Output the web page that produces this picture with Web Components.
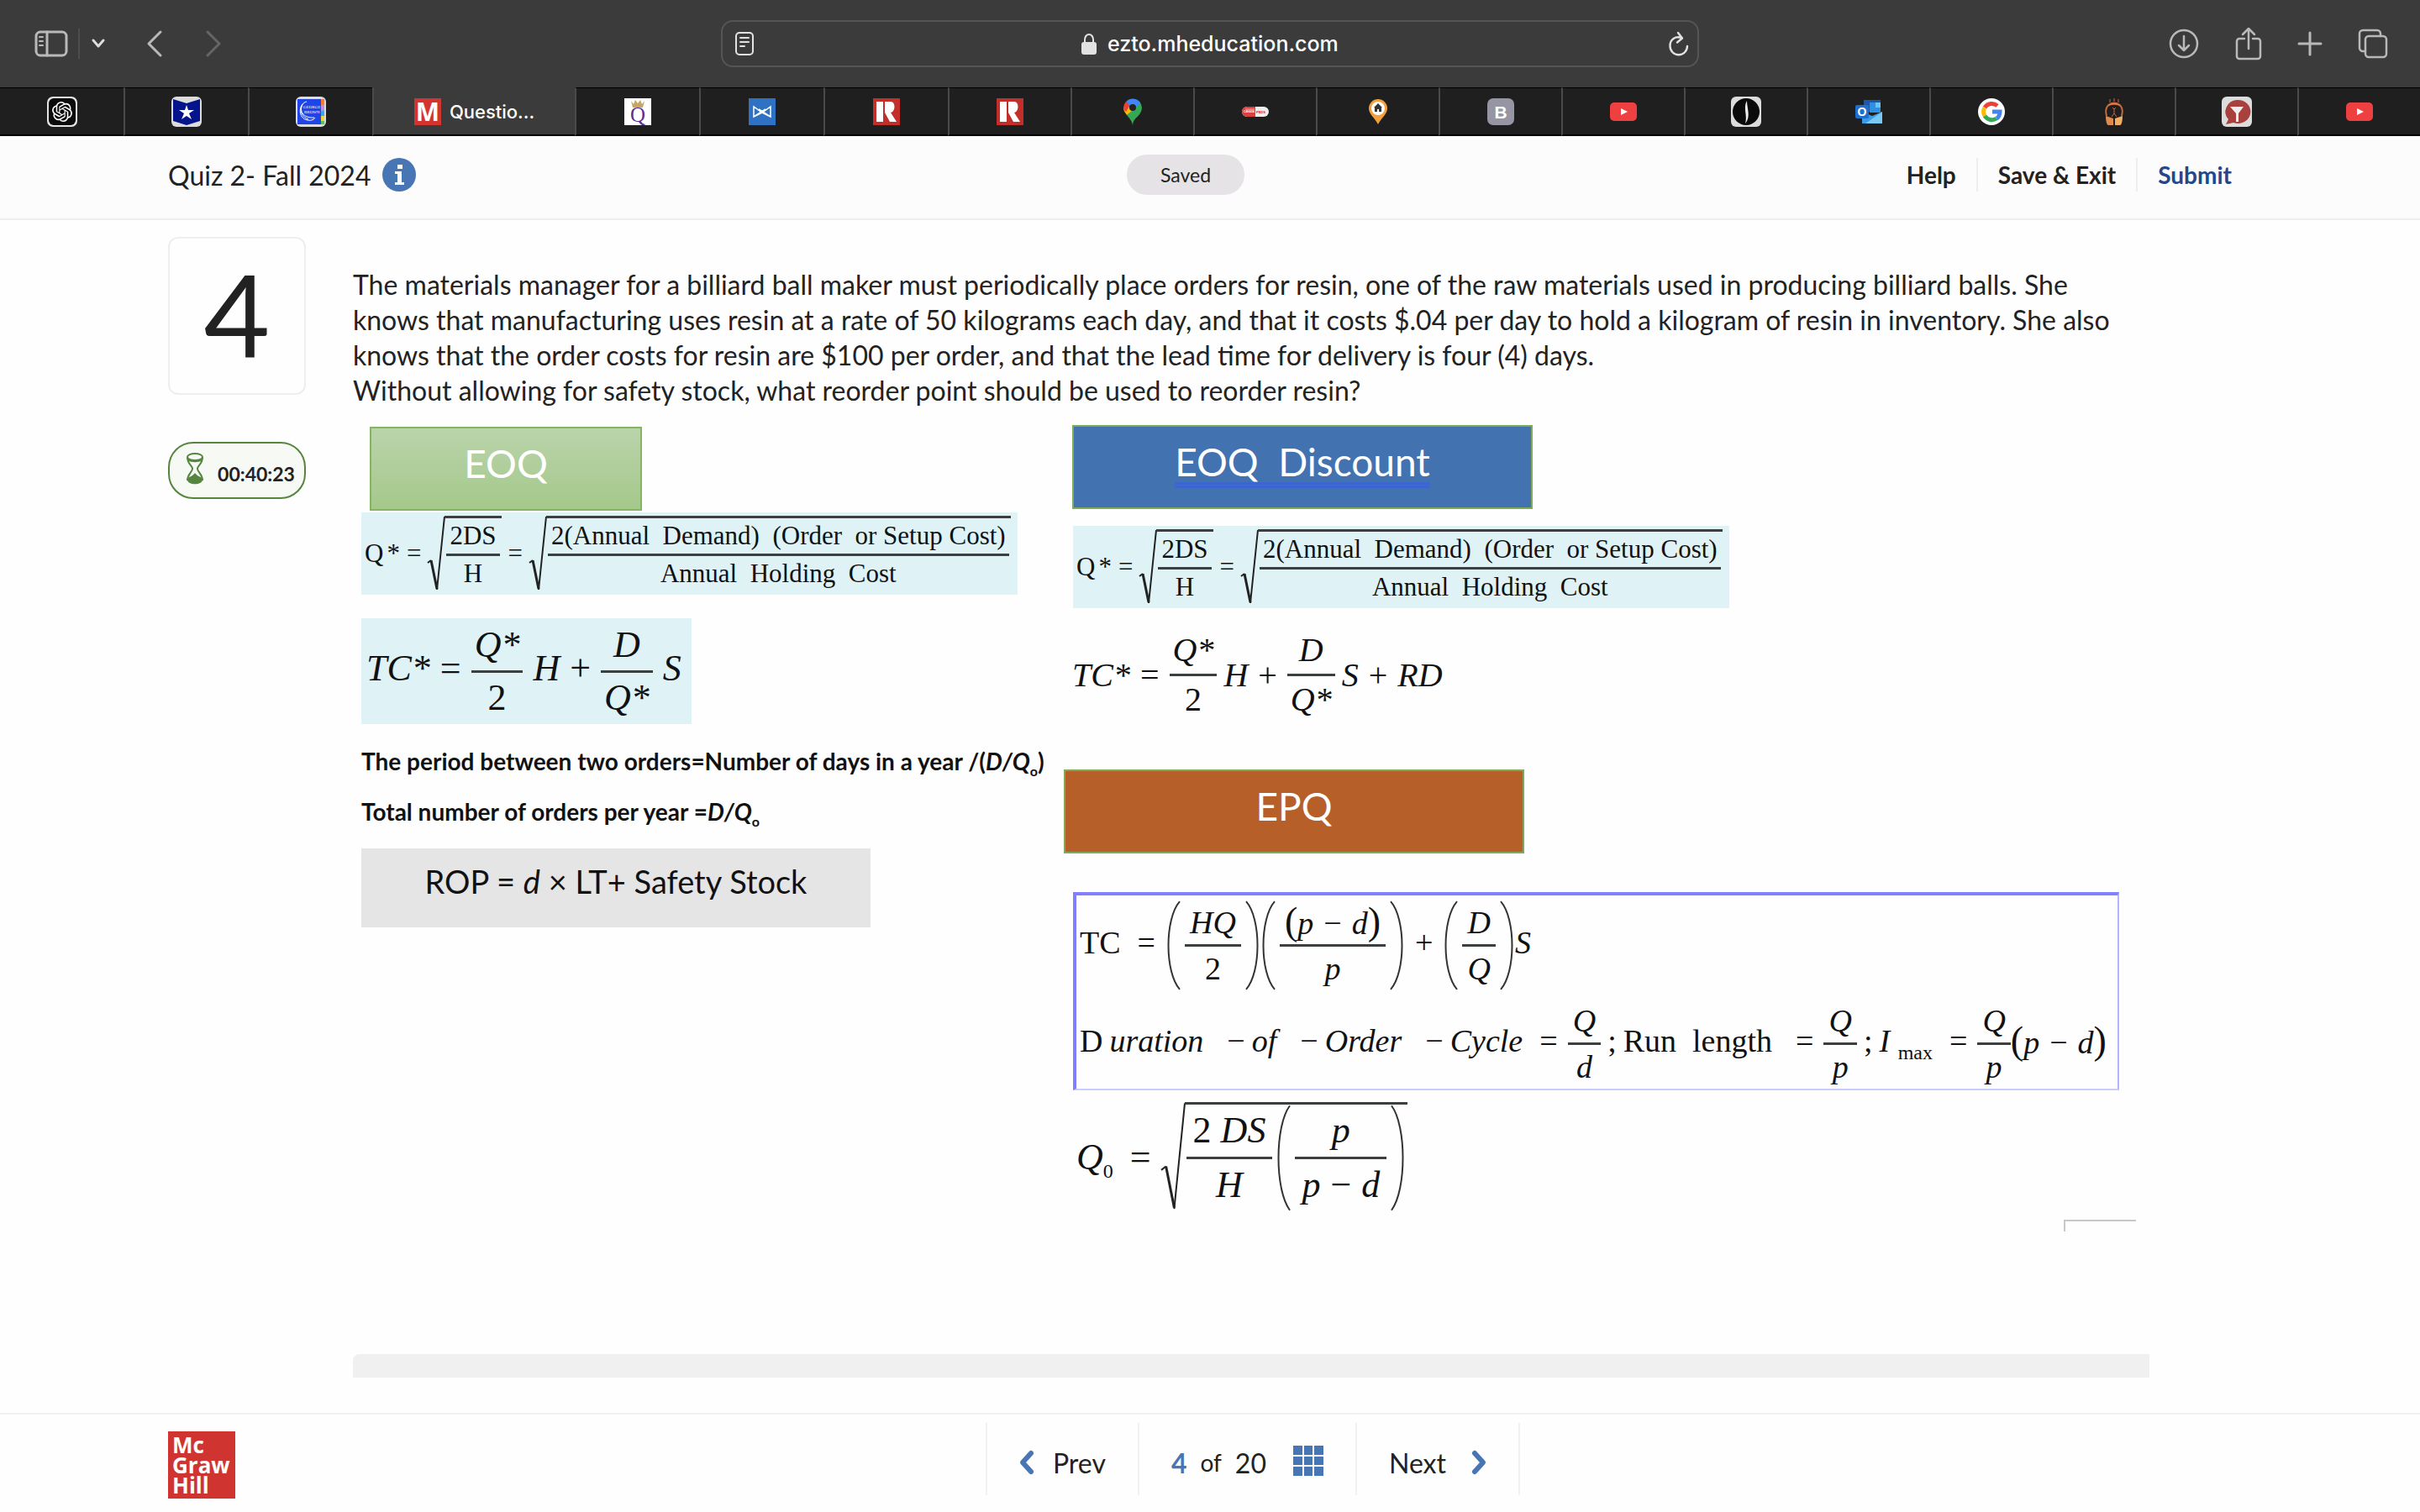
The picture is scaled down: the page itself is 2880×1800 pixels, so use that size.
<!DOCTYPE html>
<html lang="en">
<head>
<meta charset="utf-8">
<title>Quiz 2- Fall 2024</title>
<style>
  html{background:#fefefe}
  body{margin:0;min-height:100vh;display:flex;flex-direction:column;font-family:Lato,"Open Sans",sans-serif;color:#222}
  quiz-main{flex:1}
</style>
</head>
<body>
<browser-toolbar></browser-toolbar>
<browser-tabs></browser-tabs>
<quiz-header>Quiz 2- Fall 2024</quiz-header>

<quiz-main number="4" time="00:40:23">
  <question-text>
    The materials manager for a billiard ball maker must periodically place orders for resin, one of the raw materials used in producing billiard balls. She knows that manufacturing uses resin at a rate of 50 kilograms each day, and that it costs $.04 per day to hold a kilogram of resin in inventory. She also knows that the order costs for resin are $100 per order, and that the lead time for delivery is four (4) days.<br>
    Without allowing for safety stock, what reorder point should be used to reorder resin?
  </question-text>
  <formula-sheet></formula-sheet>
</quiz-main>

<quiz-footer current="4" total="20"></quiz-footer>

<script>
const define = (name, html) => customElements.define(name, class extends HTMLElement {
  constructor(){ super(); this.attachShadow({mode:'open'}); }
  connectedCallback(){
    this.shadowRoot.innerHTML = typeof html === 'function' ? html(this) : html;
  }
});

/* ---------- icons: [width, height, markup] ---------- */
const line = 'fill="none" stroke="currentColor" stroke-linecap="round" stroke-linejoin="round"';
const icons = {
  sidebar: [40,32,`<g ${line} stroke-width="3"><rect x="2" y="2" width="36" height="28" rx="5"/><path d="M15 2v28"/><path d="M6 8h4M6 13h4M6 18h4" stroke-width="2"/></g>`],
  down: [16,12,`<path ${line} stroke-width="3" d="M2 2l6 7 6-7"/>`],
  back: [18,32,`<path ${line} stroke-width="3" d="M16 2L2 16l14 14"/>`],
  forward: [18,32,`<path ${line} stroke-width="3" d="M2 2l14 14L2 30"/>`],
  reader: [24,30,`<g ${line} stroke-width="2"><rect x="2" y="2" width="20" height="26" rx="4"/><path d="M7 8h10M7 13h10M7 18h5"/></g>`],
  lock: [20,26,`<path d="M5 12V8a5 6 0 0 1 10 0v4" fill="none" stroke="currentColor" stroke-width="2"/><rect x="1" y="11" width="18" height="15" rx="3" fill="currentColor"/>`],
  reload: [24,30,`<path ${line} stroke-width="2.4" d="M16 8.500C8 5 1 10 1.500 18a10.200 10.200 0 0 0 20.500 0M11 2l5 6.500-6 5"/>`],
  download: [36,36,`<g ${line} stroke-width="2.500"><circle cx="18" cy="18" r="16"/><path d="M18 9v17M12 20l6 6 6-6"/></g>`],
  share: [32,40,`<g ${line} stroke-width="2.500"><path d="M11 14H5a3 3 0 0 0-3 3v18a3 3 0 0 0 3 3h22a3 3 0 0 0 3-3V17a3 3 0 0 0-3-3h-6"/><path d="M16 26V3M9 9l7-7 7 7"/></g>`],
  plus: [28,28,`<path ${line} stroke-width="3" d="M14 1v26M1 14h26"/>`],
  windows: [36,36,`<g ${line} stroke-width="2.500"><rect x="9" y="9" width="25" height="25" rx="4"/><path d="M9 27H6a4 4 0 0 1-4-4V6a4 4 0 0 1 4-4h17a4 4 0 0 1 4 4v3"/></g>`],
  info: [40,40,`<circle cx="20" cy="20" r="20" fill="#4875b4"/><path d="M18 8h6v5h-6zM15 16h8v13h3v3H15v-3h3v-10h-3z" fill="#fff"/>`],
  hourglass: [22,38,`<g fill="none" stroke="#55853f" stroke-width="2"><ellipse cx="11" cy="5" rx="9" ry="4"/><path d="M2 5c0 9 6 10 6 14S2 25 2 33M20 5c0 9-6 10-6 14s6 6 6 14M2 8c4 3 14 3 18 0"/></g><path d="M2 32c0-4 6-3 9-8 3 5 9 4 9 8 0 7-18 7-18 0z" fill="#55853f"/>`],
  prev: [18,30,`<path fill="none" stroke="#4875b4" stroke-width="6" stroke-linecap="round" stroke-linejoin="round" d="M14 4L4 15l10 11"/>`],
  next: [18,30,`<path fill="none" stroke="#4875b4" stroke-width="6" stroke-linecap="round" stroke-linejoin="round" d="M4 4l10 11L4 26"/>`],
  grid: [36,36,`<path fill="#4875b4" d="M0 0h11v11H0zM13 0h10v11H13zM25 0h11v11H25zM0 13h11v10H0zM13 13h10v10H13zM25 13h11v10H25zM0 25h11v11H0zM13 25h10v11H13zM25 25h11v11H25z"/>`],

  /* favicons */
  openai: [36,36,`<rect width="36" height="36" rx="7" fill="#e4e4e4"/><rect x="2" y="2" width="32" height="32" rx="6" fill="#0b0b0b"/><path transform="translate(6 6)" fill="#fff" d="M22.2819 9.8211a5.9847 5.9847 0 0 0-.5157-4.9108 6.0462 6.0462 0 0 0-6.5098-2.9A6.0651 6.0651 0 0 0 4.9807 4.1818a5.9847 5.9847 0 0 0-3.9977 2.9 6.0462 6.0462 0 0 0 .7427 7.0966 5.98 5.98 0 0 0 .511 4.9107 6.051 6.051 0 0 0 6.5146 2.9001A5.9847 5.9847 0 0 0 13.2599 24a6.0557 6.0557 0 0 0 5.7718-4.2058 5.9894 5.9894 0 0 0 3.9977-2.9001 6.0557 6.0557 0 0 0-.7475-7.0729zm-9.022 12.6081a4.4755 4.4755 0 0 1-2.8764-1.0408l.1419-.0804 4.7783-2.7582a.7948.7948 0 0 0 .3927-.6813v-6.7369l2.02 1.1686a.071.071 0 0 1 .038.052v5.5826a4.504 4.504 0 0 1-4.4945 4.4944zm-9.6607-4.1254a4.4708 4.4708 0 0 1-.5346-3.0137l.142.0852 4.783 2.7582a.7712.7712 0 0 0 .7806 0l5.8428-3.3685v2.3324a.0804.0804 0 0 1-.0332.0615L9.74 19.9502a4.4992 4.4992 0 0 1-6.1408-1.6464zM2.3408 7.8956a4.485 4.485 0 0 1 2.3655-1.9728V11.6a.7664.7664 0 0 0 .3879.6765l5.8144 3.3543-2.0201 1.1685a.0757.0757 0 0 1-.071 0l-4.8303-2.7865A4.504 4.504 0 0 1 2.3408 7.872zm16.5963 3.8558L13.1038 8.364 15.1192 7.2a.0757.0757 0 0 1 .071 0l4.8303 2.7913a4.4944 4.4944 0 0 1-.6765 8.1042v-5.6772a.79.79 0 0 0-.407-.667zm2.0107-3.0231l-.142-.0852-4.7735-2.7818a.7759.7759 0 0 0-.7854 0L9.409 9.2297V6.8974a.0662.0662 0 0 1 .0284-.0615l4.8303-2.7866a4.4992 4.4992 0 0 1 6.6802 4.66zM8.3065 12.863l-2.02-1.1638a.0804.0804 0 0 1-.038-.0567V6.0742a4.4992 4.4992 0 0 1 7.3757-3.4537l-.142.0805L8.704 5.459a.7948.7948 0 0 0-.3927.6813zm1.0976-2.3654l2.602-1.4998 2.6069 1.4998v2.9994l-2.5974 1.4997-2.6067-1.4997Z"/>`],
  star: [36,36,`<rect width="36" height="36" rx="6" fill="#dcdcdc"/><path fill="#06148c" d="M2 3l16 5 16-5v26l-16 5-16-5z"/><path fill="#fff" d="M18 10l2 6h7l-6 4 3 7-6-4-6 4 3-7-6-4h7z"/>`],
  gbc: [36,36,`<rect width="36" height="36" rx="6" fill="#dcdcdc"/><rect x="2" y="3" width="28" height="30" fill="#1f45e6"/><path fill="#f47b3b" d="M30 3h4v7h-4z"/><path fill="#b98cf0" d="M30 10h4v7h-4z"/><path fill="#3ba5f4" d="M30 17h4v6h-4z"/><path fill="#f3d43b" d="M30 23h4v6h-4z"/><path fill="#4cc95a" d="M30 29h4v4h-4z"/><path fill="none" stroke="#fff" d="M13 6C3 8 2 26 14 28c5 1 8-1 9-3M9 8c-6 8-1 18 13 17M7 11c-3 8 2 14 8 16"/><g fill="#fff" font-family="Liberation Serif" font-size="5"><text x="9" y="14">GEORGE</text><text x="10" y="20">BROWN</text></g>`],
  mgh: [32,32,`<rect width="32" height="32" fill="#d2352f"/><text x="16" y="27" text-anchor="middle" font-family="Open Sans" font-weight="700" font-size="30" fill="#fff">M</text>`],
  queens: [32,32,`<rect width="32" height="32" fill="#fff"/><path fill="#c5a663" d="M8 3l3 4 2-5 3 4 3-4 2 5 3-4-2 8H10z"/><text x="16" y="28" text-anchor="middle" font-family="Liberation Serif" font-size="25" fill="#5c2f91">Q</text>`],
  mesh: [32,32,`<rect width="32" height="32" fill="#2f72c4"/><path fill="none" stroke="#fff" stroke-width="1.500" d="M6 10v12l10-5 10 5V10l-10 7zM6 22l14-9M26 22l-14-9"/>`],
  realtor: [32,32,`<rect width="32" height="32" fill="#c22f2a"/><path fill="#fff" d="M4 4h8v24H4z"/><path fill="#fff" d="M14 4h7c6 0 6 12 0 13l7 11h-8l-6-11z"/>`],
  maps: [24,32,`<path fill="#34a853" d="M12 32c0-9 11-11 11-21a11 11 0 0 0-3-7L5 20c4 5 6 7 7 12z"/><path fill="#fbbc04" d="M5 20C2 16 1 14 1 11l5-4 5 8z"/><path fill="#ea4335" d="M1 11a11 11 0 0 1 3-7l5 4-5 8c-2-2-3-3-3-5z"/><path fill="#4285f4" d="M4 4a11 11 0 0 1 17 1l-9 11-4-8z"/><circle cx="12" cy="11" r="4" fill="#222"/>`],
  pill: [32,14,`<rect width="32" height="12" y="1" rx="6" fill="#eee"/><path fill="#d8413d" d="M6 1h10v12H6A6 6 0 0 1 6 1z"/><path d="M4 4h11" stroke="#f2b5b3"/><g font-family="Liberation Sans" font-weight="700"><text x="2" y="8" font-size="3" fill="#fff">CANADA</text><text x="17" y="9" font-size="4" fill="#c22">PEDS</text></g>`],
  house: [24,32,`<path fill="#f2a03d" d="M12 1a11 11 0 0 1 11 11c0 7-7 11-11 19C8 23 1 19 1 12A11 11 0 0 1 12 1z"/><circle cx="12" cy="12" r="8" fill="#fff"/><path fill="#333" d="M12 6l5 5h-1v5h-3v-3h-2v3H8v-5H7z"/>`],
  blog: [32,32,`<rect width="32" height="32" rx="7" fill="#9595a3"/><text x="16" y="24" text-anchor="middle" font-family="Liberation Sans" font-weight="700" font-size="21" fill="#fff">B</text>`],
  youtube: [32,22,`<rect width="32" height="22" rx="5" fill="#ee4040"/><path fill="#fff" d="M13 7l8 4-8 4z"/>`],
  leaf: [36,36,`<rect width="36" height="36" rx="6" fill="#dcdcdc"/><circle cx="18" cy="18" r="16" fill="#0a0a0a"/><path fill="#eee" d="M19 5c-5 8 1 18-2 27 7-8 2-18 2-27z"/>`],
  outlook: [32,28,`<path fill="#1d57a8" d="M10 0h20v14H10z"/><path fill="#2f8fe0" d="M17 3h13v12H17z"/><path fill="#6cc6f5" d="M24 3h6v6h-6z"/><path fill="#3b9be8" d="M8 14l12 5 12-5v14H8z"/><path fill="#79c8f5" d="M32 14v14L12 28z"/><rect y="6" width="16" height="16" rx="2" fill="#1f6fcf"/><text x="8" y="19" text-anchor="middle" font-family="Liberation Sans" font-weight="700" font-size="14" fill="#fff">O</text>`],
  google: [32,32,`<circle cx="16" cy="16" r="16" fill="#fff"/><g fill="none" stroke-width="5"><path stroke="#ea4335" d="M8 11a10 10 0 0 1 15-2"/><path stroke="#fbbc05" d="M8 21a10 10 0 0 1 0-10"/><path stroke="#34a853" d="M22 24a10 10 0 0 1-14-3"/><path stroke="#4285f4" d="M17 16h9c0 4-2 7-4 8"/></g>`],
  beetle: [24,32,`<g fill="none" stroke="#c96a3d"><path d="M7 1v4M12 0v4M17 1v4"/><path stroke-width="2" d="M3 21C0 10 6 6 12 6s12 4 9 15"/><path d="M12 13v5l-3 4M12 18l3 4M10 11l2 2 2-2"/></g><path fill="#d97445" d="M4 10c3-7 13-7 16 0-4-3-12-3-16 0z"/><path fill="#e08a4e" d="M2 21l9 3v8H5c-2 0-3-6-3-11z"/><path fill="#efb064" d="M22 21l-9 3v8h6c2 0 3-6 3-11z"/>`],
  funnel: [36,36,`<rect width="36" height="36" rx="6" fill="#dcdcdc"/><path fill="#a8403d" d="M18 4a15 14 0 1 1-4 27l-9 2 3-6A15 14 0 0 1 18 4z"/><path fill="#eee" d="M10 12h16l-6 8v10h-3V20z"/>`]
};

define('ui-icon', el => {
  const [w, h, body] = icons[el.getAttribute('name')];
  return `<style>:host{display:inline-flex;flex:none}svg{display:block;overflow:visible}</style>
    <svg width="${w}" height="${h}" viewBox="0 0 ${w} ${h}" aria-hidden="true">${body}</svg>`;
});

/* ---------- browser chrome ---------- */
define('browser-toolbar', `
  <style>
    :host{display:grid;grid-template-columns:1fr minmax(0,1164px) 1fr;align-items:center;height:104px;background:#3b3b3b;color:#b9b9b9;font-family:Inter,sans-serif}
    button{border:0;padding:0;background:none;color:inherit;display:flex}
    .left{display:flex;align-items:center;padding-left:41px}
    .sep{width:2px;height:36px;background:#4d4d4d;margin:0 14px 0 12px}
    .left .back{margin:0 52px 0 50px}
    .off{color:#666}
    .menu{color:#ddd}
    .url{display:flex;align-items:center;justify-content:space-between;box-sizing:border-box;height:56px;border:2px solid #555;border-radius:14px;padding:0 10px 0 14px;color:#e2e2e2}
    label{display:flex;align-items:center;gap:12px}
    input{border:0;padding:0;background:none;color:#fff;font:500 25px Inter,sans-serif;width:280px}
    .right{display:flex;align-items:center;justify-content:flex-end;gap:43px;padding-right:38px}
  </style>
  <div class="left">
    <button aria-label="Sidebar"><ui-icon name="sidebar"></ui-icon></button>
    <span class="sep"></span>
    <button class="menu" aria-label="Tab groups"><ui-icon name="down"></ui-icon></button>
    <button class="back" aria-label="Back"><ui-icon name="back"></ui-icon></button>
    <button class="off" aria-label="Forward"><ui-icon name="forward"></ui-icon></button>
  </div>
  <div class="url">
    <button aria-label="Reader"><ui-icon name="reader"></ui-icon></button>
    <label><ui-icon name="lock"></ui-icon><input aria-label="Address" value="ezto.mheducation.com"></label>
    <button aria-label="Reload"><ui-icon name="reload"></ui-icon></button>
  </div>
  <div class="right">
    <button aria-label="Downloads"><ui-icon name="download"></ui-icon></button>
    <button aria-label="Share"><ui-icon name="share"></ui-icon></button>
    <button aria-label="New tab"><ui-icon name="plus"></ui-icon></button>
    <button aria-label="All tabs"><ui-icon name="windows"></ui-icon></button>
  </div>
`);

const tabs = ['openai','star','gbc','mgh','queens','mesh','realtor','realtor','maps','pill','house','blog','youtube','leaf','outlook','google','beetle','funnel','youtube'];
define('browser-tabs', () => `
  <style>
    :host{display:grid;grid-template-columns:147fr 148fr 148fr 241fr repeat(3,148fr) repeat(12,146fr);height:58px;background:#1f1f1f;font-family:Inter,sans-serif}
    button{display:flex;align-items:center;justify-content:center;gap:10px;min-width:0;border:0;border-top:1px solid #000;border-bottom:2px solid #000;padding:0;background:none;color:#fff;font:500 22px Inter,sans-serif}
    button + button{border-left:2px solid #4a4a4a}
    .on{background:#3b3b3b;border-top-color:#3b3b3b}
  </style>
  ${tabs.map(t => t === 'mgh'
    ? `<button class="on"><ui-icon name="mgh"></ui-icon>Questio...</button>`
    : `<button aria-label="${t}"><ui-icon name="${t}"></ui-icon></button>`).join('')}
`);

/* ---------- quiz header ---------- */
define('quiz-header', `
  <style>
    :host{display:grid;grid-template-columns:1141fr auto 1175fr;align-items:center;height:92px;padding:0 224px 6px 200px;background:#fcfcfc;border-bottom:2px solid #eee}
    .title{display:flex;align-items:center;gap:14px;font-size:32px}
    .saved{display:flex;align-items:center;justify-content:center;width:140px;height:48px;border-radius:24px;background:#e6e3e6;font-size:23px}
    nav{display:flex;align-items:center;justify-content:flex-end}
    a{color:#222;text-decoration:none;font-size:28px;font-weight:700;line-height:40px;padding:0 24px}
    a + a{border-left:2px solid #eee}
    a:last-child{color:#23478a;padding-right:0}
    button{border:0;padding:0;background:none;display:flex}
  </style>
  <div class="title"><slot></slot><button aria-label="Info"><ui-icon name="info"></ui-icon></button></div>
  <span class="saved">Saved</span>
  <nav><a href="#help">Help</a><a href="#exit">Save &amp; Exit</a><a href="#submit">Submit</a></nav>
`);

/* ---------- question ---------- */
define('quiz-main', el => `
  <style>
    :host{display:grid;grid-template-columns:164px minmax(0,1fr);gap:56px;align-items:start;padding:20px 322px 40px 200px}
    aside{display:flex;flex-direction:column;gap:56px}
    .num{display:flex;align-items:center;justify-content:center;height:178px;padding-bottom:6px;border:2px solid #eee;border-radius:12px;font-size:136px}
    .time{display:flex;align-items:center;justify-content:center;gap:16px;height:64px;padding-left:8px;border:2px solid #55853f;border-radius:30px;background:#f7f9f5;font-size:23px;font-weight:700}
    .time ui-icon{padding-bottom:4px}
    .time span{padding-top:8px}
    .end{height:28px;background:#f0f0f0;border-top-left-radius:8px}
  </style>
  <aside>
    <div class="num">${el.getAttribute('number')}</div>
    <div class="time"><ui-icon name="hourglass"></ui-icon><span>${el.getAttribute('time')}</span></div>
  </aside>
  <section><slot></slot><div class="end"></div></section>
`);

define('question-text', `
  <style>:host{display:block;padding-top:36px;font-size:32px;line-height:42px}</style>
  <slot></slot>
`);

/* ---------- math parts ---------- */
// a row of terms, centred on the fraction bar
define('m-row', `
  <style>
    :host{display:flex;align-items:center;white-space:nowrap;font-family:"Liberation Serif",serif;color:#111}
    ::slotted(:not(m-frac,m-root,m-paren)){padding-bottom:var(--lift,0)}
  </style>
  <slot></slot>
`);

define('m-frac', `
  <style>
    :host{display:inline-flex;flex-direction:column;align-items:stretch;text-align:center}
    div{display:flex;align-items:center;justify-content:center;height:var(--line,42px);line-height:var(--line,42px);padding:0 var(--pad,4px)}
    hr{width:100%;height:3px;margin:0;border:0;background:#3c3f40}
  </style>
  <div><slot name="n"></slot></div><hr><div><slot name="d"></slot></div>
`);

define('m-root', `
  <style>
    :host{display:inline-flex;align-items:stretch}
    svg{display:block;width:var(--tick,20px);height:auto;overflow:visible}
    div{display:flex;align-items:center;border-top:3px solid #3c3f40;padding:0 2px}
  </style>
  <svg viewBox="0 0 20 90" preserveAspectRatio="none" fill="none" stroke="#222">
    <path d="M0 56l4-3" stroke-width="2" vector-effect="non-scaling-stroke"/>
    <path d="M4 53l7 34" stroke-width="3" vector-effect="non-scaling-stroke"/>
    <path d="M11 88L20 1" stroke-width="2" vector-effect="non-scaling-stroke"/>
  </svg>
  <div><slot></slot></div>
`);

const paren = d => `<svg viewBox="0 0 16 100" preserveAspectRatio="none"><path d="${d}" fill="none" stroke="#333" stroke-width="2" vector-effect="non-scaling-stroke"/></svg>`;
define('m-paren', `
  <style>
    :host{display:inline-flex;align-items:stretch}
    svg{display:block;width:16px;height:auto;margin:0 2px}
    div{display:flex;align-items:center;padding:0 3px}
  </style>
  ${paren('M15 1C-3 20-3 80 15 99')}<div><slot></slot></div>${paren('M1 1c18 19 18 79 0 98')}
`);

define('m-op', `
  <style>
    :host{display:inline-block;margin:0 12px;font-style:normal}
    :host([tight]){margin:0 8px}
    :host([wide]){margin:0 12px 0 20px}
    :host([far]){margin:0 12px 0 28px}
    :host([minus]){margin:0 8px 0 28px}
  </style>
  <slot></slot>
`);

/* ---------- formula sheet ---------- */
const eoq = `
  <m-row class="eq">
    <span>Q</span><span class="star">*</span><m-op tight>=</m-op>
    <m-root><m-frac><span slot="n">2DS</span><span slot="d">H</span></m-frac></m-root>
    <m-op tight>=</m-op>
    <m-root><m-frac><span slot="n">2(Annual&nbsp; Demand)&nbsp; (Order&nbsp; or Setup Cost)</span><span slot="d">Annual&nbsp; Holding&nbsp; Cost</span></m-frac></m-root>
  </m-row>`;
const pd = `<span class="big">(</span><i>p</i><m-op>−</m-op><i>d</i><span class="big">)</span>`;

define('formula-sheet', `
  <style>
    :host{display:grid;grid-template-columns:836fr 1292fr;align-items:start;padding:20px 0 146px 10px;color:#111}
    .col{display:flex;flex-direction:column;align-items:flex-start}
    h2{box-sizing:border-box;height:100px;margin:0;text-align:center;font-size:46px;font-weight:400;line-height:84px;color:#fff;border:2px solid #7dab59}
    .green{width:324px;margin:2px 0 2px 10px;background:linear-gradient(#bad4ab,#a5c88b);border-color:#86b562}
    .blue{width:548px;margin:0 0 20px 10px;background:#4272b0}
    .blue span{white-space:pre;text-decoration:underline double #3b66d0 3px;text-underline-offset:7px}
    .brown{width:548px;margin:0 0 46px;background:#b65f29}
    .eq{box-sizing:border-box;height:98px;padding:0 8px 0 4px;background:#dff3f7;font-size:31px}
    .star{margin-left:4px}
    .tc{box-sizing:border-box;height:126px;margin:28px 0 14px;padding:0 12px 0 6px;background:#dff3f7;font-size:44px;--line:60px;--lift:8px}
    p{margin:0;font-size:28px;font-weight:700;line-height:60px;white-space:nowrap}
    sub{font-size:16px;line-height:0}
    .rop{box-sizing:border-box;width:606px;height:94px;margin-top:14px;text-align:center;background:#e5e5e5;font-size:38px;font-weight:400;line-height:78px}
    .right > m-row,.box{margin-left:11px}
    .right > .tcd{margin:22px 0 55px 10px;font-size:40px;--line:56px}
    .box{display:flex;flex-direction:column;gap:10px;align-self:stretch;margin-right:36px;padding:6px 0 0 4px;border:solid #8080ff;border-width:4px 2px 2px 4px;border-right-color:#b3b3ff;border-bottom-color:#ccccff;font-size:38px;--line:52px;--pad:6px;--lift:8px}
    .big{font-size:46px}
    .right > .q0{margin:14px 0 0 15px;font-size:44px;--line:62px;--pad:8px;--tick:28px}
    .q0 m-paren{margin-left:4px}
    .q0 sub,.box sub{font-size:24px}
    .gap{margin-left:8px}
    .tc .gap{margin-left:12px}
    .corner{align-self:flex-end;width:84px;height:12px;margin:10px 16px 0 0;border:solid #c8c8c8;border-width:2px 0 0 2px}
  </style>
  <div class="col">
    <h2 class="green">EOQ</h2>
    ${eoq}
    <m-row class="tc">
      <i>TC*</i><m-op>=</m-op>
      <m-frac><i slot="n">Q*</i><span slot="d">2</span></m-frac>
      <i class="gap">H</i><m-op>+</m-op>
      <m-frac><i slot="n">D</i><i slot="d">Q*</i></m-frac>
      <i class="gap">S</i>
    </m-row>
    <p>The period between two orders=Number of days in a year /(<i>D/Q</i><sub>o</sub>)</p>
    <p>Total number of orders per year =<i>D/Q</i><sub>o</sub></p>
    <p class="rop">ROP = <i>d</i> × LT+ Safety Stock</p>
  </div>
  <div class="col right">
    <h2 class="blue"><span>EOQ  Discount</span></h2>
    ${eoq}
    <m-row class="tcd">
      <i>TC*</i><m-op>=</m-op>
      <m-frac><i slot="n">Q*</i><span slot="d">2</span></m-frac>
      <i class="gap">H</i><m-op>+</m-op>
      <m-frac><i slot="n">D</i><i slot="d">Q*</i></m-frac>
      <i class="gap">S</i><m-op>+</m-op><i>RD</i>
    </m-row>
    <h2 class="brown">EPQ</h2>
    <div class="box">
      <m-row>
        <span>TC</span><m-op wide>=</m-op>
        <m-paren><m-frac><i slot="n">HQ</i><span slot="d">2</span></m-frac></m-paren>
        <m-paren><m-frac><span slot="n">${pd}</span><i slot="d">p</i></m-frac></m-paren>
        <m-op>+</m-op>
        <m-paren><m-frac><i slot="n">D</i><i slot="d">Q</i></m-frac></m-paren>
        <i>S</i>
      </m-row>
      <m-row>
        <span>D</span><i class="gap">uration</i><m-op minus>−</m-op><i>of</i><m-op minus>−</m-op><i>Order</i><m-op minus>−</m-op><i>Cycle</i>
        <m-op wide>=</m-op><m-frac><i slot="n">Q</i><i slot="d">d</i></m-frac>
        <m-op tight>;</m-op><span>Run&nbsp; length</span>
        <m-op far>=</m-op><m-frac><i slot="n">Q</i><i slot="d">p</i></m-frac>
        <m-op tight>;</m-op><span><i>I</i> <sub>max</sub></span>
        <m-op wide>=</m-op><m-frac><i slot="n">Q</i><i slot="d">p</i></m-frac>
        <span>${pd}</span>
      </m-row>
    </div>
    <m-row class="q0">
      <span><i>Q</i><sub>0</sub></span><m-op wide>=</m-op>
      <m-root>
        <m-frac><span slot="n">2 <i>DS</i></span><i slot="d">H</i></m-frac>
        <m-paren><m-frac><i slot="n">p</i><span slot="d"><i>p</i><m-op>−</m-op><i>d</i></span></m-frac></m-paren>
      </m-root>
    </m-row>
    <div class="corner"></div>
  </div>
`);

/* ---------- footer ---------- */
define('quiz-footer', el => `
  <style>
    :host{display:grid;grid-template-columns:973fr auto 871fr;align-items:start;height:106px;padding:10px 200px 0;border-top:2px solid #f1f1f1}
    .logo{box-sizing:border-box;width:80px;height:80px;margin-top:10px;padding:4px 5px;background:#cf3430;color:#fff;font:700 26px/24px "Open Sans",sans-serif}
    nav{display:flex;border-right:2px solid #f1f1f1}
    nav > *{display:flex;align-items:center;box-sizing:border-box;height:86px;border:0;border-left:2px solid #f1f1f1;padding:8px 38px 0;background:none;color:#222;font:32px Lato,sans-serif}
    .prev{gap:22px}
    .next{gap:30px}
    .pos{gap:16px}
    .pos b{color:#4875b4}
    .pos small{font-size:28px}
    .pos button{display:flex;border:0;padding:0 0 4px;margin-left:16px;background:none}
  </style>
  <div class="logo">Mc<br>Graw<br>Hill</div>
  <nav>
    <button class="prev"><ui-icon name="prev"></ui-icon>Prev</button>
    <div class="pos"><b>${el.getAttribute('current')}</b><small>of</small><span>${el.getAttribute('total')}</span><button aria-label="All questions"><ui-icon name="grid"></ui-icon></button></div>
    <button class="next">Next<ui-icon name="next"></ui-icon></button>
  </nav>
`);
</script>
</body>
</html>
